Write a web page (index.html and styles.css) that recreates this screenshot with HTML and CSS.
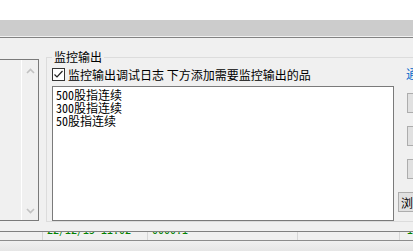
FILE: index.html
```html
<!DOCTYPE html>
<html lang="zh-CN">
<head>
  <meta charset="UTF-8">
  <meta name="viewport" content="width=device-width, initial-scale=1.0">
  <title>监控输出</title>
  <link rel="stylesheet" href="styles.css">
</head>
<body>
  <div class="titlebar"></div>
  <div class="tabs"></div>

  <div class="panel">
    <div class="listbox">
      <div class="list-area"></div>
      <div class="vscroll">
        <svg class="arrow" width="9" height="6" viewBox="0 0 9 6"><polyline points="1,5 4.5,1.5 8,5" /></svg>
        <svg class="arrow" width="9" height="6" viewBox="0 0 9 6"><polyline points="1,1 4.5,4.5 8,1" /></svg>
      </div>
    </div>

    <fieldset class="group">
      <legend>监控输出</legend>
      <div class="group-body">
        <div class="main-col">
          <label class="check-row">
            <span class="checkbox">
              <svg width="11" height="11" viewBox="0 0 11 11"><polyline points="1.5,5.5 4,8 9.5,2" /></svg>
            </span>
            监控输出调试日志 下方添加需要监控输出的品
          </label>
          <div class="output">
            <div>500股指连续</div>
            <div>300股指连续</div>
            <div>50股指连续</div>
          </div>
        </div>
        <div class="side-col">
          <a class="link">通</a>
          <button class="btn"></button>
          <button class="btn"></button>
          <button class="btn"></button>
          <button class="btn browse">浏览</button>
        </div>
      </div>
    </fieldset>
  </div>

  <div class="grid">
    <div class="cell"></div>
    <div class="cell"><span>22/12/15 11:02</span></div>
    <div class="cell"><span>0000.1</span></div>
    <div class="cell"></div>
    <div class="cell last"><span>1</span></div>
  </div>
  <div class="status"></div>
</body>
</html>
```

FILE: styles.css
```css
html, body {
  overflow: hidden;
}
body {
  margin: 0;
  width: 413px;
  height: 251px;
  background: #f0f0f0;
  font-family: "Noto Sans CJK SC", "Liberation Sans", sans-serif;
  font-size: 12px;
  color: #000;
}
.titlebar {
  height: 20px;
  background: #fff;
}
.tabs {
  height: 16px;
  background: #cccccc;
  margin-bottom: 1px;
}
.panel {
  display: flex;
  align-items: flex-start;
  height: 193px;
  border-top: 1px solid #828282;
}
.listbox {
  flex: none;
  display: flex;
  box-sizing: border-box;
  width: 39px;
  height: 162px;
  margin-top: 21px;
  border: 1px solid #7a7a7a;
  border-left: none;
}
.list-area {
  width: 21px;
}
.vscroll {
  width: 16px;
  border-left: 1px solid #fff;
  display: flex;
  flex-direction: column;
  justify-content: space-between;
  align-items: center;
  padding: 8px 0 6px;
}
.arrow polyline {
  fill: none;
  stroke: #c2c2c2;
  stroke-width: 1.6;
}
.group {
  flex: none;
  width: 420px;
  margin: 12px 0 0 7px;
  padding: 0 0 0 5px;
  border: 1px solid #dcdcdc;
  min-width: 0;
}
.group legend {
  padding: 0 2px;
  line-height: 14px;
}
.group-body {
  display: flex;
}
.main-col {
  width: 342px;
}
.check-row {
  display: flex;
  align-items: center;
  height: 14px;
  margin-top: 3px;
  white-space: nowrap;
}
.checkbox {
  display: flex;
  align-items: center;
  justify-content: center;
  box-sizing: border-box;
  width: 13px;
  height: 13px;
  margin-right: 3px;
  background: #fff;
  border: 1px solid #333;
}
.checkbox polyline {
  fill: none;
  stroke: #222;
  stroke-width: 1.2;
}
.output {
  box-sizing: border-box;
  height: 135px;
  margin-top: 5px;
  padding: 1px 0 0 3px;
  background: #fff;
  border: 1px solid #7a7a7a;
  font-feature-settings: "hwid";
}
.output div {
  height: 13px;
  line-height: 13px;
}
.side-col {
  display: flex;
  flex-direction: column;
  align-items: flex-start;
  margin-left: 4px;
}
.link {
  margin: 3px 0 0 8px;
  line-height: 14px;
  color: #0066cc;
}
.btn {
  box-sizing: border-box;
  width: 50px;
  height: 20px;
  margin: 12px 0 0 9px;
  padding: 0;
  background: #e1e1e1;
  border: 1px solid #adadad;
  font: inherit;
}
.btn + .btn {
  margin-top: 13px;
}
.btn.browse {
  margin-left: 0;
  padding-left: 2px;
  text-align: left;
  white-space: nowrap;
}
.grid {
  display: grid;
  grid-template-columns: 42px 105px 150px 102px 1fr;
  height: 8px;
  border-top: 1px solid #808080;
  border-bottom: 1px solid #8c8c8c;
  background: #f0f0f0;
}
.cell {
  overflow: hidden;
  border-left: 1px solid #d6d6d6;
  padding-left: 4px;
  color: #008000;
  line-height: 12px;
  white-space: nowrap;
  font-feature-settings: "hwid";
}
.cell:first-child {
  border-left: none;
}
.cell span {
  display: block;
  margin-top: -9px;
}
.cell.last {
  padding-left: 7px;
}
.status {
  height: 10px;
  background: linear-gradient(#f0f0f0, #e6e6e6);
}
```
